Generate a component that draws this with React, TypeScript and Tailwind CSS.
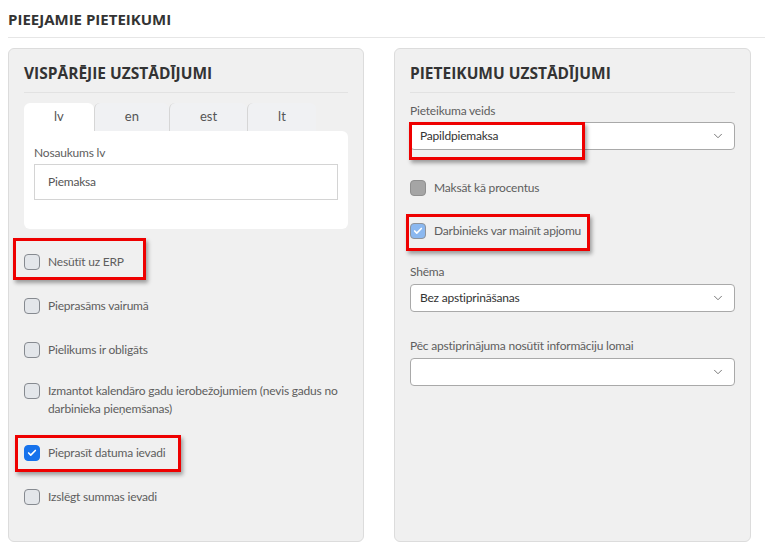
import { ChevronDown, Check } from 'lucide-react';

const font = { fontFamily: 'Lato, "Open Sans", sans-serif' };
const headFont = { fontFamily: '"Open Sans", "Noto Sans", sans-serif' };

function Box({ checked = false, disabled = false }: { checked?: boolean; disabled?: boolean }) {
  let cls = 'bg-[#e3e6ea] border-[#868a90]';
  if (checked && !disabled) cls = 'bg-[#1672ec] border-[#1672ec]';
  if (checked && disabled) cls = 'bg-[#8bb8f0] border-[#8f9399]';
  if (!checked && disabled) cls = 'bg-[#a5a5a5] border-[#8f8f8f]';
  return (
    <span className={`w-4 h-4 shrink-0 rounded-[4px] border flex items-center justify-center mt-px ${cls}`}>
      {checked && <Check className="w-2.5 h-2.5 text-white" strokeWidth={4} />}
    </span>
  );
}

function Row({ label, checked, disabled, children }: { label: string; checked?: boolean; disabled?: boolean; children?: React.ReactNode }) {
  return (
    <div className="relative flex items-start gap-2 leading-[18px]">
      <Box checked={checked} disabled={disabled} />
      <span className="text-[#5e5e5e]">{label}</span>
      {children}
    </div>
  );
}

function Mark({ className }: { className: string }) {
  return <div className={`absolute border-[3px] border-[#ee0000] shadow-[2px_3px_4px_rgba(0,0,0,0.35)] pointer-events-none ${className}`} />;
}

function Select({ value, children }: { value: string; children?: React.ReactNode }) {
  return (
    <div className="relative h-[28px] bg-white border border-[#a9a9a9] rounded-[4px] flex items-center justify-between pl-[9px] pr-[9px]">
      <span className="text-[#333]">{value}</span>
      <ChevronDown className="w-3.5 h-3.5 text-[#666]" strokeWidth={1.5} />
      {children}
    </div>
  );
}

function Heading({ children }: { children: React.ReactNode }) {
  return (
    <h2 className="text-[15.5px] font-bold text-[#333] tracking-normal pb-[9px] border-b border-[#e2e2e2] leading-[20px]" style={headFont}>
      {children}
    </h2>
  );
}

export default function App() {
  const tabs = ['lv', 'en', 'est', 'lt'];

  return (
    <div className="w-[765px] h-[552px] bg-white text-[12px] tracking-[-0.2px] overflow-hidden" style={font}>
      <div className="pl-2 pt-[9px]">
        <h1 className="text-[15px] font-bold text-[#333] tracking-normal leading-[20px] pb-[8px] border-b border-[#e6e6e6]" style={headFont}>
          PIEEJAMIE PIETEIKUMI
        </h1>
      </div>

      <div className="flex gap-[30px] pl-2 mt-[10px]">
        {/* left panel */}
        <div className="w-[356px] bg-[#f0f0f0] border border-[#dcdcdc] rounded-[6px] px-[15px] pt-[14px] pb-[35px]">
          <Heading>VISPĀRĒJIE UZSTĀDĪJUMI</Heading>

          <div className="flex mt-[10px]">
            {tabs.map((t, i) => (
              <div
                key={t}
                className={`h-[28px] px-[30px] flex items-center rounded-t-[6px] text-[13px] tracking-normal ${
                  i === 0 ? 'bg-white text-[#555]' : 'bg-[#f0f1f3] border-l border-[#d6d6d6] text-[#555]'
                }`}
              >
                {t}
              </div>
            ))}
          </div>
          <div className="bg-white rounded-b-[6px] rounded-tr-[6px] px-[10px] pt-[14px] pb-[29px]">
            <div className="text-[#5e5e5e] leading-[16px] mb-[3px]">Nosaukums lv</div>
            <div className="h-[36px] border border-[#d4d4d4] flex items-center px-[13px] text-[#555]">Piemaksa</div>
          </div>

          <div className="flex flex-col gap-[26px] mt-[24px]">
            <Row label="Nesūtīt uz ERP">
              <Mark className="-left-[11px] -top-[15px] w-[133px] h-[42px]" />
            </Row>
            <Row label="Pieprasāms vairumā" />
            <Row label="Pielikums ir obligāts" />
            <div className="-mt-[3px]">
              <Row label="Izmantot kalendāro gadu ierobežojumiem (nevis gadus no darbinieka pieņemšanas)" />
            </div>
            <Row label="Pieprasīt datuma ievadi" checked>
              <Mark className="-left-[9px] -top-[9px] w-[166px] h-[37px]" />
            </Row>
            <Row label="Izslēgt summas ievadi" />
          </div>
        </div>

        {/* right panel */}
        <div className="w-[357px] bg-[#f0f0f0] border border-[#dcdcdc] rounded-[6px] px-[15px] pt-[14px]">
          <Heading>PIETEIKUMU UZSTĀDĪJUMI</Heading>

          <div className="text-[#5e5e5e] leading-[16px] mt-[10px] mb-[3px]">Pieteikuma veids</div>
          <Select value="Papildpiemaksa">
            <Mark className="-left-[2px] -top-[1px] w-[176px] h-[38px]" />
          </Select>

          <div className="flex flex-col gap-[25px] mt-[29px]">
            <Row label="Maksāt kā procentus" disabled />
            <Row label="Darbinieks var mainīt apjomu" checked disabled>
              <Mark className="-left-[4px] -top-[8px] w-[184px] h-[37px]" />
            </Row>
          </div>

          <div className="text-[#5e5e5e] leading-[16px] mt-[24px] mb-[4px]">Shēma</div>
          <Select value="Bez apstiprināšanas" />

          <div className="text-[#5e5e5e] leading-[16px] mt-[26px] mb-[4px]">Pēc apstiprinājuma nosūtīt informāciju lomai</div>
          <Select value="" />
        </div>
      </div>
    </div>
  );
}
